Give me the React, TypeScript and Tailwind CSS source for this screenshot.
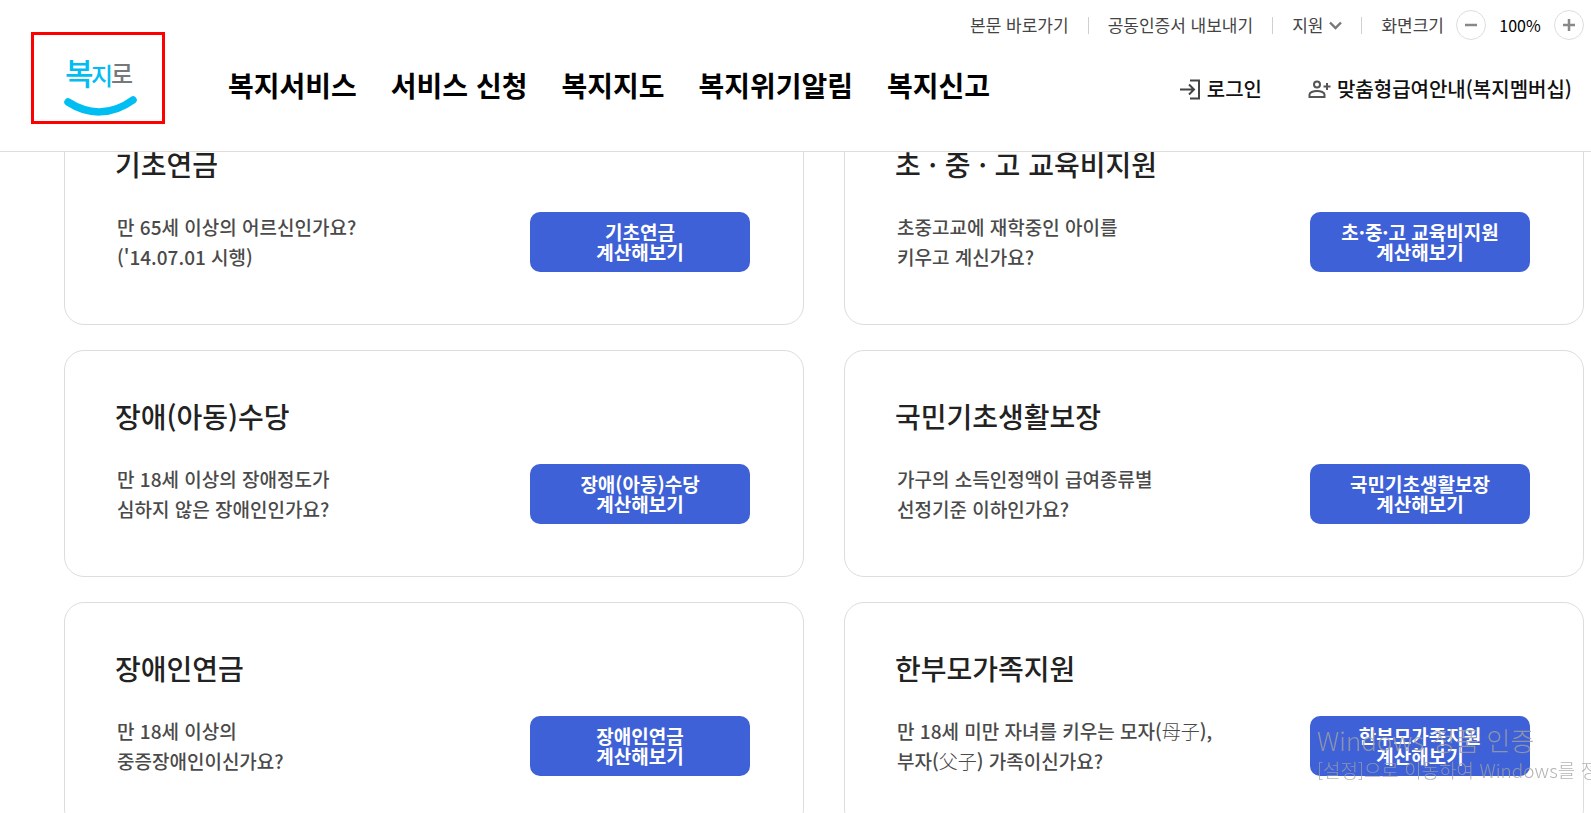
import { clsx } from 'clsx'
import type { ReactNode } from 'react'

const MENU = ['복지서비스', '서비스 신청', '복지지도', '복지위기알림', '복지신고']

type Benefit = {
  title: string
  lines: [ReactNode, ReactNode]
  button?: string
}

const BENEFITS: Benefit[] = [
  { title: '기초연금', lines: ['만 65세 이상의 어르신인가요?', "('14.07.01 시행)"] },
  {
    title: '초 · 중 · 고 교육비지원',
    lines: ['초중고교에 재학중인 아이를', '키우고 계신가요?'],
    button: '초·중·고 교육비지원',
  },
  {
    title: '장애(아동)수당',
    lines: ['만 18세 이상의 장애정도가', '심하지 않은 장애인인가요?'],
  },
  {
    title: '국민기초생활보장',
    lines: ['가구의 소득인정액이 급여종류별', '선정기준 이하인가요?'],
  },
  { title: '장애인연금', lines: ['만 18세 이상의', '중증장애인이신가요?'] },
  {
    title: '한부모가족지원',
    lines: [
      <>
        만 18세 미만 자녀를 키우는 모자(<Hanja>母子</Hanja>),
      </>,
      <>
        부자(<Hanja>父子</Hanja>) 가족이신가요?
      </>,
    ],
  },
]

function Hanja({ children }: { children: ReactNode }) {
  return <span className="font-light">{children}</span>
}

function Logo() {
  return (
    <a
      href="#"
      aria-label="복지로"
      className="mt-8 shrink-0 border-[3px] border-[#ff0000]"
    >
      <svg width="128" height="86" viewBox="0 0 128 86" className="block">
        <g fontWeight="500">
          <text x="31" y="50" fontSize="31" fill="#00bdf2">
            복
          </text>
          <text x="57" y="50" fontSize="24" fill="#00bdf2">
            지
          </text>
          <text x="77" y="48" fontSize="24" fill="#77787b">
            로
          </text>
        </g>
        <path
          d="M34 67 C54 80 77 81 99 65"
          fill="none"
          stroke="#00bdf2"
          strokeWidth="7.5"
          strokeLinecap="round"
        />
      </svg>
    </a>
  )
}

function Divider() {
  return <span className="mx-[19px] h-[17px] w-px bg-[#d0d0d0]" />
}

function ZoomButton({ label, children }: { label: string; children: ReactNode }) {
  return (
    <button
      type="button"
      aria-label={label}
      className="flex size-[30px] items-center justify-center rounded-full border border-[#ddd]"
    >
      <svg width="14" height="14" viewBox="0 0 14 14" stroke="#888" strokeWidth="2.5">
        {children}
      </svg>
    </button>
  )
}

function UtilityBar() {
  return (
    <div className="flex h-[30px] items-center self-end text-[17px] text-[#444]">
      <a href="#content">본문 바로가기</a>
      <Divider />
      <a href="#">공동인증서 내보내기</a>
      <Divider />
      <button type="button" className="flex items-center gap-1.5">
        지원
        <svg width="13" height="9" viewBox="0 0 13 9" fill="none" stroke="#777" strokeWidth="2.4">
          <path d="M1 1.500 6.500 7 12 1.500" />
        </svg>
      </button>
      <Divider />
      <span>화면크기</span>
      <span className="ml-3 flex items-center">
        <ZoomButton label="축소">
          <path d="M1 7h12" />
        </ZoomButton>
        <span className="w-[68px] text-center text-base text-black">100%</span>
        <ZoomButton label="확대">
          <path d="M1 7h12M7 1v12" />
        </ZoomButton>
      </span>
    </div>
  )
}

function AccountLinks() {
  return (
    <div className="mt-2.5 mr-3 flex items-center gap-[46px] text-xl font-medium text-[#111]">
      <a href="#" className="flex items-center gap-1.5">
        <svg width="21" height="21" viewBox="0 0 21 21" fill="none" stroke="#444" strokeWidth="2">
          <path d="M0 10.500h14M9 5.500l5 5-5 5M10 1.500h9v18h-9" />
        </svg>
        로그인
      </a>
      <a href="#" className="flex items-center gap-1.5">
        <svg width="23" height="21" viewBox="0 0 23 21" fill="none" stroke="#555" strokeWidth="2">
          <circle cx="9" cy="5.500" r="3" />
          <path d="M1.500 18v-2.500c0-2 3.500-3.500 7.500-3.500s7.500 1.500 7.500 3.500V18zM15.500 7.500h7M19 4v7" />
        </svg>
        맞춤형급여안내(복지멤버십)
      </a>
    </div>
  )
}

function Header() {
  return (
    <header className="fixed inset-x-0 top-0 z-10 flex h-[152px] items-start border-b border-[#ddd] bg-white pr-[7px] pl-[31px] whitespace-nowrap">
      <Logo />
      <div className="ml-[63px] flex grow flex-col gap-[25px] pt-2.5">
        <UtilityBar />
        <div className="flex items-start justify-between">
          <nav className="flex gap-[34px] text-[28px] leading-10 font-bold text-black">
            {MENU.map((item) => (
              <a key={item} href="#">
                {item}
              </a>
            ))}
          </nav>
          <AccountLinks />
        </div>
      </div>
    </header>
  )
}

function BenefitCard({ title, lines, button = title }: Benefit) {
  return (
    <article className="rounded-[20px] border border-[#ddd] pt-11 pr-[53px] pb-[52px] pl-[50px]">
      <h2 className="text-[28px] leading-[42px] font-medium text-[#222]">{title}</h2>
      <div className="mt-[27px] flex items-start justify-between pl-0.5">
        <p className="text-[19px] leading-[30px] font-medium text-[#4a4a4a]">
          {lines[0]}
          <br />
          {lines[1]}
        </p>
        <button
          type="button"
          className={clsx(
            'h-[60px] w-[220px] shrink-0 rounded-[10px] bg-[#3e61d7]',
            'text-[19px] leading-5 font-bold text-white',
          )}
        >
          {button}
          <br />
          계산해보기
        </button>
      </div>
    </article>
  )
}

function ActivationNotice() {
  return (
    <aside className="pointer-events-none fixed right-0 bottom-[31px] z-20 w-[274px] overflow-hidden font-light whitespace-nowrap text-[#a0a0a0]/80">
      <p className="text-[26px] leading-9">Windows 정품 인증</p>
      <p className="text-[19px] leading-6">[설정]으로 이동하여 Windows를 정품 인증합니다.</p>
    </aside>
  )
}

export default function App() {
  return (
    <div
      lang="ko"
      className="h-screen overflow-hidden bg-white font-['Noto_Sans_CJK_KR','Noto_Sans',sans-serif]"
    >
      <Header />
      <main id="content" className="grid grid-cols-2 gap-x-10 gap-y-[25px] pt-[98px] pr-[7px] pl-16">
        {BENEFITS.map((benefit) => (
          <BenefitCard key={benefit.title} {...benefit} />
        ))}
      </main>
      <ActivationNotice />
    </div>
  )
}
